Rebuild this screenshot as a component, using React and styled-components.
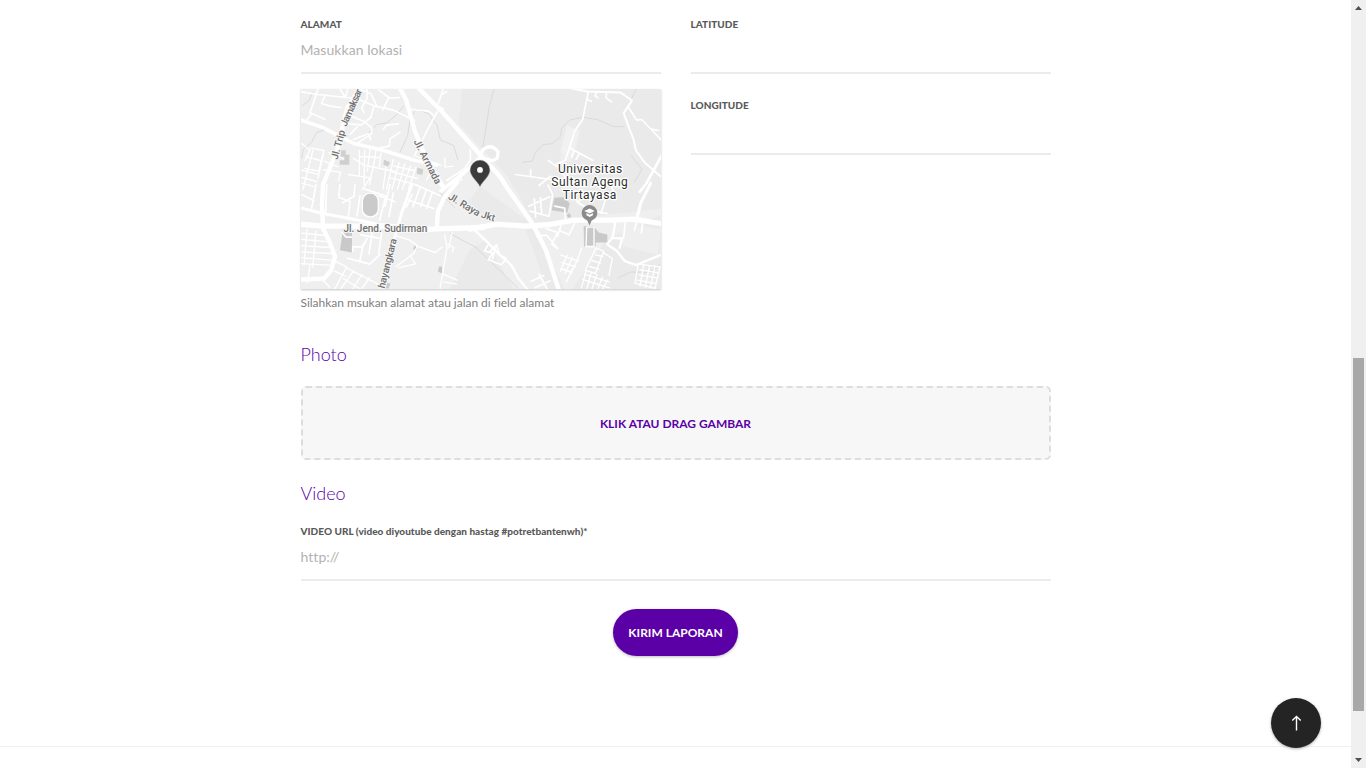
import React from 'react';
import styled, { createGlobalStyle } from 'styled-components';

const GlobalStyle = createGlobalStyle`
  * { box-sizing: border-box; }
  body { margin: 0; background: #fff; overflow: hidden; font-family: Lato, sans-serif; }
`;
const Page = styled.div`
  display: flex;
  height: 768px;
  overflow: hidden;
`;
const Main = styled.main`
  flex: 1;
  display: flex;
  flex-direction: column;
`;
const Form = styled.form`
  width: 750px;
  height: 746px;
  margin: 0 auto;
  padding-top: 17px;
`;
const Footer = styled.footer`
  flex: 1;
  border-top: 1px solid #f0f0f0;
`;
const Columns = styled.div`
  display: grid;
  grid-template-columns: 360px 360px;
  gap: 30px;
  height: 321px;
`;
const Field = styled.div`
  height: ${(p) => p.$height || 81}px;
`;
const Label = styled.label`
  display: block;
  height: 15px;
  font-size: 10px;
  line-height: 14px;
  font-weight: 900;
  letter-spacing: 0.035px;
  color: #5a5a5a;
  white-space: nowrap;
`;
const Input = styled.input`
  display: block;
  width: 100%;
  height: 42px;
  margin: 0;
  padding: 0 0 6px;
  border: 0;
  border-bottom: 2px solid #ebebeb;
  border-radius: 0;
  outline: 0;
  background: transparent;
  font: 14px Lato, sans-serif;
  letter-spacing: 0.05px;
  &::placeholder { color: #b2b2b2; opacity: 1; }
`;
const MapFrame = styled.div`
  width: 360px;
  height: 200px;
  margin-top: -9px;
  box-shadow: 0 1px 2px rgba(0, 0, 0, 0.22);
  svg { display: block; }
`;
const Hint = styled.p`
  margin: 6px 0 0;
  font-size: 12px;
  line-height: 16px;
  letter-spacing: -0.025px;
  color: #808080;
`;
const Heading = styled.h2`
  margin: 0;
  padding-top: ${(p) => p.$top}px;
  height: ${(p) => p.$height}px;
  font-size: 18px;
  line-height: 22px;
  font-weight: 300;
  color: #5a00a6;
`;
const DropZone = styled.div`
  display: flex;
  align-items: center;
  justify-content: center;
  height: 74px;
  border: 2px dashed #ddd;
  border-radius: 5px;
  background: #f7f7f7;
  color: #5a00a6;
  font-size: 12px;
  font-weight: 700;
`;
const Submit = styled.button`
  display: block;
  width: 125px;
  height: 47px;
  margin: 29px auto 0;
  padding: 0;
  border: 0;
  border-radius: 24px;
  background: #5a00a6;
  box-shadow: 0 1px 3px rgba(0, 0, 0, 0.25);
  color: #fff;
  font: 700 12px Lato, sans-serif;
`;
const BackToTop = styled.a`
  position: fixed;
  right: 45px;
  bottom: 20px;
  display: flex;
  align-items: center;
  justify-content: center;
  width: 50px;
  height: 50px;
  border-radius: 50%;
  background: #242424;
  box-shadow: 0 1px 3px rgba(0, 0, 0, 0.3);
`;
const Scrollbar = styled.div`
  display: flex;
  flex-direction: column;
  align-items: center;
  width: 15px;
  background: #f0f0f0;
`;
const ScrollArrow = styled.svg`
  display: block;
  width: 15px;
  height: 15px;
`;
const Track = styled.div`
  flex: 1;
  padding-top: 343px;
`;
const Thumb = styled.div`
  width: 11px;
  height: 353px;
  background: #a8a8a8;
`;
const Road = styled.path`
  fill: none;
  stroke: #fff;
  stroke-width: ${(p) => p.$w || 5};
  stroke-linejoin: round;
  stroke-linecap: round;
`;
const Stream = styled.path`
  fill: none;
  stroke: #dadada;
  stroke-width: 3;
`;
const Street = styled.text`
  font-family: Roboto, sans-serif;
  font-size: 10px;
  font-weight: 500;
  letter-spacing: ${(p) => p.$track || 0}px;
  fill: #707070;
  stroke: #f7f7f7;
  stroke-width: 2px;
  paint-order: stroke;
`;
const Place = styled.text`
  font: 12px Roboto, sans-serif;
  letter-spacing: 0.5px;
  fill: #303030;
  stroke: #fff;
  stroke-width: 2.5px;
  paint-order: stroke;
  text-anchor: middle;
`;

const LocationMap = () => (
  <svg width="360" height="200" viewBox="301 89.5 360 200">
    <path fill="#efefef" d="M300 89h362v201H300z" />
    <path fill="#eaeaea" d="M462 89h200v120l-60 7-67 8-28-48-48-51zM480 187l50 36-34 2-30-20zM535 229l30 61H450l20-40 29-18zM606 240l56-25v75h-90z" />
    <path fill="#efefef" d="M567 126l13 5-8 32-12-3zM481 232l44-4 22 61-33 1zM620 223l41 7-3 25-35-8z" />
    <g transform="translate(290 80) scale(.33333)">
      <Stream d="M35 237l5-28 25-20 14-30 30-9M230 167l30-32 31-5 31-26 20-26M330 218l23-50 8-55 18-24 37 14 25 34 10 44 40 17 13 44M35 80l20-15 15-28" />
      <path fill="#cfcfcf" d="M152 212h15v14h11v30h-29v-14h14v-10h-11zM282 241l18 7-6 13-14-6zM382 264l18 6-3 16-17-3z" />
      <Road $w={11} d="M570 235l-47 44-70 55M30 121l66 22 93 48 95 23 92 29 64 13" />
      <Road $w={5} d="M541 211v31l-18 26-53 35M442 96l-29 54-40 80M445 72l14-42M433 73l28 16M470 37l-18 10" />
      <Road $w={5} d="M35 37l48 8 118 12 54 23 53 11 66 32M85 26L60 100l45 19M45 128l20-26M150 28l15 26 9-26M107 45l-13 27 28 8 31 4M231 26v32l-16 27 7 14M251 83l-9 31-27 22-39-3M267 32l30 22-19 37M294 56l34-2M203 26l40 17 16 33M185 110l39 17 22 19-2 17-49 33M202 142l-21 22M190 180l45-17 7 18M325 133l-36 4-9 12M330 158l-30 20-2 22-29 5M365 90l51 5 18 15" />
      <Road $w={4} d="M35 192l25 20-15 31M60 205l42 8-16 62-41-8M48 231l43 12M69 212l-30 118M102 214l-18 83M35 272l48 12M35 294l45 12M32 310l44 12M117 220l43 17M102 245l43 17M100 271l51 7-5 25M208 213v77M224 211l-2 105M240 210l-8 64M258 212l-10 62M273 221l-5 40M211 231l60 3M190 236l31 21 93 19M175 285l65 10-22 35M246 275l-7 41M288 263l-9 65M310 240l-20 88M327 249l-21 80M345 253l-23 77M361 260l-24 70M378 263l-23 67M312 260l60 13M307 277l75 20M301 295l83 22M380 231l54 20-24 50M407 240l47 18M465 235v28l25-3M510 279l4 23-17-5" />
    </g>
    <g transform="translate(475 80) scale(.33333)">
      <Stream d="M58 26l-15 54-20 130M142 248l30-3 8-23 23-27 28-2 25-21 4-26 24-24 39-9 47 8 44 20 34 1M484 28l-16 33M466 225l35 45-24 40" />
      <path fill="#f1f1f1" d="M277 137l34 16-20 75-36-9z" />
      <Road $w={10} d="M13 227l13-18q24-17 43 8l-2 18q-13 14-34 3" />
      <Road $w={8} d="M563 223l-49 89-20 25" />
      <Road $w={6} d="M286 26l52 10 99 3 34 24-25 38 18 49 11 28 8 35 25 35 55 48" />
      <Road $w={5} d="M340 37l-17 83-24 35-28 87-25 11M338 60l11 5M366 36l-6 13 9 6M394 40v16l16 11M461 84l24 38 15-2 29 30 31 33M529 149l22 4M283 205l70 37M298 214l-8 19M313 222l-10 18M220 243l33 23 21 33-16 20M122 285l106 15M167 271v20M227 290l-35 28M326 303l-17 19" />
    </g>
    <g transform="translate(290 185) scale(.33333)">
      <Stream d="M480 147l80 43M450 25l45 45M150 130l14 8" />
      <path fill="#c9c9c9" d="M158 141h28v63l-36-7zM373 184l8 3-2 10-9-3zM447 246h9v20l-12-4zM289 294l12 4-5 14h-12z" />
      <rect x="215" y="25" width="52" height="74" rx="24" fill="#fff" />
      <rect x="219" y="28" width="44" height="67" rx="21" fill="#cacaca" />
      <Road $w={16} d="M30 119l68 6h198l85 12 60-4 137-4" />
      <Road $w={13} d="M440 134l4-55 20-41L502-8" />
      <Road $w={9} d="M30 70l69 17 84 16 126 25M366 0l-29 79-14 48-24 90-20 94" />
      <Road $w={5} d="M78 0L64 77M30 28l42 20M110 0l-3 84M150 0l-4 38 34 13-5 48M195 0l-3 35-34 20M210 34l-9 60M219 12l68 22-18 74M300 0l-15 65M375 0l75 33M355 47l76 25M366 30l-17 38M390 9l-21 58M409 15l-17 51M428 22l-18 50M267 34l48 18M310 25l-13 71M157 144l10 13 17 1M188 201v-14h30l13-25M213 151l53 10M275 146l-9 60M246 148l-9 60M172 221l67 18 31-29M220 178l-11 54" />
      <Road $w={4} d="M34 146l73 7M30 164l86 8M30 183l90 6M30 202l98 5M30 219l93 8M30 237l88 5M51 135l-9 106M78 140l-10 108M60 242l-8 53M92 280l27 28M135 230l35 18-36 66M170 250l92 48M160 282l48 30M190 260l-37 52M216 270l-27 42M240 279l-25 33M133 260l34 15M320 154l40 13 22 17-10 22-54 41M380 184l56 20 21-17M360 213l16 25-50 12M464 150l7 40-21 123M471 178l20 11-4 13M486 145l-9 45M459 269l42 18M461 293l38 5" />
    </g>
    <g transform="translate(475 185) scale(.33333)">
      <path fill="#c9c9c9" d="M238 40l26-2 20 18-7 29-47-8zM275 92l8-7 6 10-8 6zM326 125h30l15 19 26 6v24h-35v12h-35z" />
      <Stream d="M0 186l130 126M430 280l35-17h60l30-23" />
      <Road $w={16} d="M-15 134l80-15 88 6 72-5 72-13h114l65-3 85 14" />
      <Road $w={9} d="M527-4l-30 60-11 44" />
      <Road $w={7} d="M0 138l31 29 42 43 36 32 21 39 28 35M421 113l-8 46-17 20 29 20 25 31 33 12 73-30M410 160l31 2-7 28" />
      <Road $w={5} d="M219 2l14 28-11 65M161 65l63-28M165 80l55 15M178 42l4 56M196 40l4 45M239 65l30 6 2 31M294 23l14 31 43 25M329 28l-20 27M398 25l-20 62M353 79l43 8M407 0l10 25M185 155l30-3 33 40-18-13 18-35-35-12M260 117l-12 37M300 114l-18 37-30-14M451 110l-5 50M485 111l-7 27M503 115l-4 30M38 184l-10 15 25 7-13 20 39 15 15-19-20-12-10-29-18 19M60 190l-7 33M168 291l38-18M180 310l45-21M192 270l26 45" />
      <Road $w={4} d="M335 128h22v58h-24zM320 190l-11 32-35 70M258 212l50 17M276 212l-20 48M292 219l-22 48M310 224l-24 40M260 234l43 13M258 252l33 12M361 190l25 10-25 67-30-10 31-65M361 211l22 5M350 228l27 8M343 246l29 8M387 206l25 16-10 50M333 260l-14 51M348 266l-12 46M365 270l-14 42M382 278l-13 34M398 286l-15 27M328 269l76 24M323 285l80 25M490 239l-10 57 60 16 15-65-65-8M495 256l57 9M492 271l56 10M486 287l58 10M506 242l-11 62M523 246l-12 62M540 244l-14 66" />
    </g>
    <Road $w={4.5} d="M417 87l24 24 39 44 20 22 7 11 26 37 13 26 14 43" />
    <Road $w={4.4} d="M399 87l7 13 9 32 12 29 17 28M360 88l-13 21-10 42-14 34-1 20 1 24 6 12 6 16-4 14-7 8-24 1" />
    <Street transform="translate(337.5 160.5) rotate(-75)" $track={-0.1}>Jl. Trip</Street>
    <Street transform="translate(346.3 127.5) rotate(-66)" $track={-0.65}>Jamaksar</Street>
    <Street transform="translate(413.5 142) rotate(63)">Jl. Armada</Street>
    <Street transform="translate(447.5 199) rotate(31)">Jl. Raya</Street>
    <Street transform="translate(480.5 217.8) rotate(17)">Jkt</Street>
    <Street x="343.5" y="232">Jl. Jend. Sudirman</Street>
    <Street transform="translate(384.5 289.3) rotate(-76)" $track={-0.1}>hayangkara</Street>
    <Place x="590.3" y="173.5">Universitas</Place>
    <Place x="589.8" y="186.5">Sultan Ageng</Place>
    <Place x="589.8" y="199.5">Tirtayasa</Place>
    <path fill="#8b8b8b" d="M589.5 226l-2.2-5.1a7.8 7.8 0 1 1 4.4 0z" />
    <path fill="#fff" d="M584.2 211.6l5.6-2.6 4.8 2.6-4.8 2.5zM586.4 213.5l3.4 1.8 3.1-1.8v2.2l-3.1 1.8-3.4-1.8z" />
    <path fill="#3b3b3b" stroke="#777" strokeWidth=".5" d="M480 187c-2-4.8-9.8-10-9.8-16.4a9.8 9.8 0 0 1 19.6 0c0 6.4-7.8 11.6-9.8 16.4z" />
    <circle cx="480" cy="170.4" r="2.9" fill="#fff" />
  </svg>
);

export default function App() {
  return (
    <Page>
      <GlobalStyle />
      <Main>
        <Form>
          <Columns>
            <div>
              <Field>
                <Label>ALAMAT</Label>
                <Input placeholder="Masukkan lokasi" />
              </Field>
              <MapFrame><LocationMap /></MapFrame>
              <Hint>Silahkan msukan alamat atau jalan di field alamat</Hint>
            </div>
            <div>
              <Field><Label>LATITUDE</Label><Input /></Field>
              <Field><Label>LONGITUDE</Label><Input /></Field>
            </div>
          </Columns>
          <Heading $top={5} $height={48}>Photo</Heading>
          <DropZone>KLIK ATAU DRAG GAMBAR</DropZone>
          <Heading $top={22} $height={64}>Video</Heading>
          <Field $height={56}>
            <Label>VIDEO URL (video diyoutube dengan hastag #potretbantenwh)*</Label>
            <Input placeholder="http://" />
          </Field>
          <Submit type="button">KIRIM LAPORAN</Submit>
        </Form>
        <Footer />
      </Main>
      <Scrollbar>
        <ScrollArrow><path fill="#505050" d="M4 10l3.5-4L11 10z" /></ScrollArrow>
        <Track><Thumb /></Track>
        <ScrollArrow><path fill="#505050" d="M4 5l3.5 4L11 5z" /></ScrollArrow>
      </Scrollbar>
      <BackToTop>
        <svg width="12" height="18" viewBox="0 0 12 18" fill="none" stroke="#fff" strokeWidth="1.4">
          <path d="M6.5 16.5V2.5M2.3 6.4l4.2-4 4.2 4" />
        </svg>
      </BackToTop>
    </Page>
  );
}
